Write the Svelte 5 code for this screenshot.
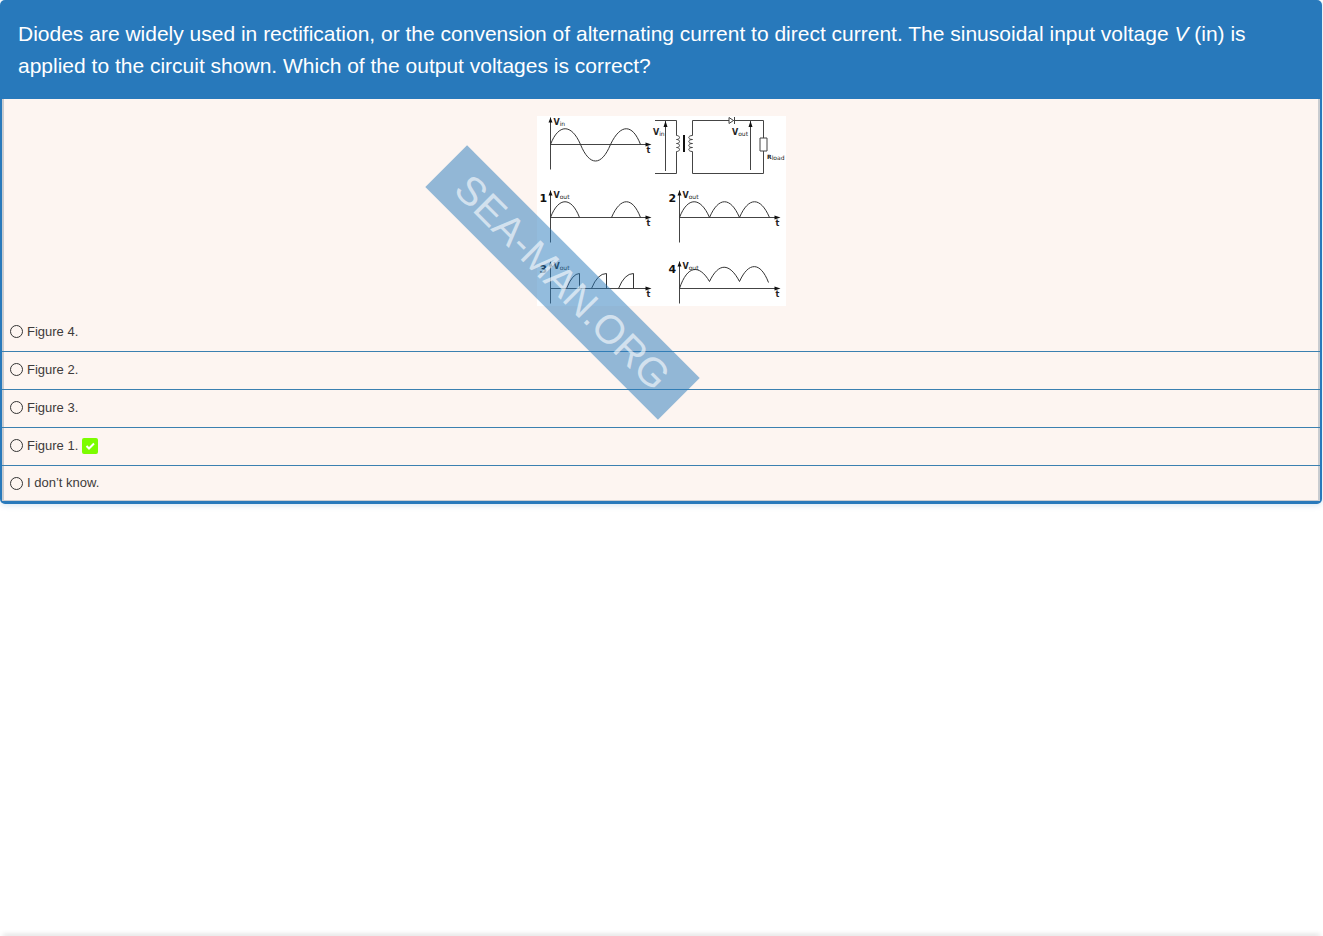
<script lang="ts">
  type Option = { id: string; label: string; correct?: boolean };

  const options: Option[] = [
    { id: "figure-4", label: "Figure 4." },
    { id: "figure-2", label: "Figure 2." },
    { id: "figure-3", label: "Figure 3." },
    { id: "figure-1", label: "Figure 1.", correct: true },
    { id: "unknown", label: "I don’t know." }
  ];

  // x/y is the origin of each graph, up/down the reach of its vertical axis
  const graphs = [
    { name: "", sub: "in", x: 13.5, y: 28.5, up: 27, down: 25, wave: "M0 0C8-21 21-21 30 0C39 22 51 22 60 0C70-21 82-21 90 0" },
    { name: "1", sub: "out", x: 13.5, y: 101.5, up: 27, down: 25, wave: "M0 0C8-21 21-21 29 0M61 0C70-21 82-21 90 0" },
    { name: "2", sub: "out", x: 142.5, y: 101.5, up: 27, down: 25, wave: "M0 0C8-21 21-21 30 0C39-21 51-21 60 0C69-21 81-21 90 0" },
    { name: "3", sub: "out", x: 13.5, y: 172.5, up: 27, down: 15, wave: "M16 0Q22-15 29-15V0M41 0Q47-15 56-15V0M68 0Q74-15 83-15V0" },
    { name: "4", sub: "out", x: 142.5, y: 172.5, up: 27, down: 15, wave: "M0 0C8-24 20-24 30-7C39-26 50-26 60-7C69-27 81-27 89-6" }
  ];

  let selected = $state("");
</script>

<main class="page">
  <section class="question">
    <h1>
      Diodes are widely used in rectification, or the convension of alternating current to direct current.
      The sinusoidal input voltage <em>V</em> (in) is applied to the circuit shown. Which of the output
      voltages is correct?
    </h1>

    <div class="body">
      <div class="figure">
        <svg viewBox="0 0 249 190" role="img" aria-label="Rectifier circuit and output voltages">
          {#each graphs as graph}
            <g transform={`translate(${graph.x} ${graph.y})`}>
              <path class="line" d={`M0 ${graph.down}V${-graph.up}M0 0H98`} />
              <path class="tip" d={`M-2 ${5 - graph.up}L0 ${-graph.up}L2 ${5 - graph.up}ZM95-2L101 0L95 2Z`} />
              <path class="line wave" d={graph.wave} />
              <text class="volt" x="3" y="-20">V<tspan class="sub" dy="1">{graph.sub}</tspan></text>
              <text class="volt" x="96" y="8">t</text>
              {#if graph.name}
                <text class="number" x="-11" y="-16">{graph.name}</text>
              {/if}
            </g>
          {/each}

          <path class="line" d="M118 4.5H139.5V19.5c4 0 4 4 0 4c4 0 4 4 0 4c4 0 4 4 0 4c4 0 4 4 0 4V57.5H118" />
          <path class="line" d="M226.5 22V4.5H155.5V19.5c-5 0-5 4 0 4c-5 0-5 4 0 4c-5 0-5 4 0 4c-5 0-5 4 0 4V57.5H226.5V35" />
          <path class="core" d="M147 19V36" />
          <path class="line part" d="M223 22H230V35H223ZM192 1.5V7.5L196.5 4.5Z" />
          <path class="line" d="M197.5 1V8M128.5 55V5M213.5 54V5" />
          <path class="tip" d="M126.5 11L128.5 5L130.5 11ZM211.5 11L213.5 5L215.5 11Z" />
          <text class="volt" x="116" y="19">V<tspan class="sub" dy="1">in</tspan></text>
          <text class="volt" x="195" y="19">V<tspan class="sub" dy="1">out</tspan></text>
          <text class="volt load" x="230" y="43">R<tspan class="sub" dy="1">load</tspan></text>
        </svg>
        <span class="watermark">SEA-MAN.ORG</span>
      </div>

      <div class="options" role="radiogroup" aria-label="Answers">
        {#each options as option (option.id)}
          <label class="option">
            <input type="radio" name="answer" value={option.id} bind:group={selected} />
            <span>{option.label}</span>
            {#if option.correct}
              <svg class="check" viewBox="0 0 16 16" role="img" aria-label="Correct">
                <rect width="16" height="16" rx="2" />
                <path d="M4.5 8L7 10.5L12 5.5" />
              </svg>
            {/if}
          </label>
        {/each}
      </div>
    </div>
  </section>

  <div class="next-edge"></div>
</main>

<style>
  :global(body) {
    background: #fff;
  }

  .page {
    display: flex;
    flex-direction: column;
    justify-content: space-between;
    min-height: 100vh;
    color: #3d3b3b;
    font-family: "Liberation Sans", Arial, sans-serif;
  }

  .question {
    overflow: hidden;
    margin-right: 1px;
    border-radius: 5px;
    background: #2879bb;
    box-shadow: 0 1px 6px rgb(40 121 187 / 22%);
  }

  h1 {
    margin: 0;
    padding: 18px 18px 17px;
    color: #fff;
    font-size: 21px;
    font-weight: 400;
    line-height: 32px;
  }

  .body {
    margin: 0 2px 3px;
    border: solid #c9ccd0;
    border-width: 0 2px 1px;
    background: #fdf5f1;
  }

  .figure {
    position: relative;
    display: flex;
    justify-content: center;
    padding-top: 17px;
  }

  .figure > svg {
    width: 249px;
    height: 190px;
    background: #fff;
  }

  .line {
    fill: none;
    stroke: #444;
    stroke-width: 1;
  }

  .wave {
    stroke: #333;
  }

  .part {
    fill: #fff;
  }

  .core {
    stroke: #111;
    stroke-width: 2;
  }

  .tip {
    fill: #111;
  }

  .volt {
    fill: #222;
    font: bold 8px "DejaVu Sans", sans-serif;
  }

  .sub {
    font-size: 6px;
    font-weight: 400;
  }

  .load,
  .load .sub {
    font-size: 6px;
  }

  .number {
    fill: #111;
    font: bold 11px "DejaVu Sans", sans-serif;
  }

  .watermark {
    position: absolute;
    top: 50%;
    left: 50%;
    z-index: 1;
    width: 329px;
    margin: 50px 0 0 -263px;
    background: rgb(40 121 187 / 50%);
    color: rgb(255 255 255 / 60%);
    font-size: 40px;
    line-height: 59px;
    text-align: center;
    transform: rotate(45deg);
    pointer-events: none;
  }

  .options {
    margin: 8px -2px 0;
  }

  .option {
    display: flex;
    align-items: center;
    gap: 4px;
    height: 35px;
    padding: 0 8px 2px;
    font-size: 13px;
    line-height: 20px;
  }

  .option + .option {
    border-top: 1px solid #3b80b0;
  }

  .option:last-child {
    height: 34px;
    padding-bottom: 0;
  }

  input {
    width: 13px;
    height: 13px;
    margin: 0;
    border: 1px solid #333;
    border-radius: 50%;
    background: transparent;
    appearance: none;
  }

  input:checked {
    background: radial-gradient(#2879bb 40%, #fff 50%);
  }

  .check {
    width: 16px;
    height: 16px;
  }

  .check rect {
    fill: #7cfc00;
  }

  .check path {
    fill: none;
    stroke: #fff;
    stroke-width: 2;
  }

  .next-edge {
    margin: 0 4px;
    box-shadow: 0 0 5px 1px rgb(0 0 0 / 25%);
  }
</style>
